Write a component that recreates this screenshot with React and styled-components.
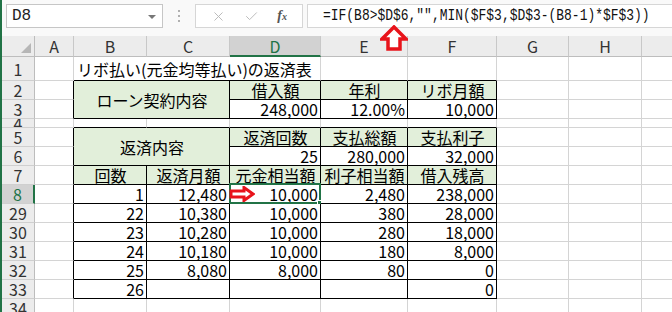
import React from "react";
import styled, { createGlobalStyle } from "styled-components";
import { X, Check } from "lucide-react";

const GlobalStyle = createGlobalStyle`
  html, body {
    margin: 0;
    padding: 0;
    background: #fff;
  }
  body {
    width: 672px;
    height: 312px;
    overflow: hidden;
    font-family: "Noto Sans CJK JP", "Noto Sans", sans-serif;
  }
`;

const GREEN = "#217346";
const FILL = "#e2efda";
const GRID = "#d4d4d4";

const COLS = [33, 39, 73, 83, 91, 87, 89, 72, 73, 90];
const LETTERS = ["A", "B", "C", "D", "E", "F", "G", "H", "I"];

const Window = styled.div`
  position: relative;
  width: 672px;
  height: 312px;
  overflow: hidden;
  border-left: 2px solid ${GREEN};
  box-sizing: border-box;
  background: #fff;
`;

const FormulaBar = styled.div`
  display: flex;
  align-items: flex-start;
  height: 36px;
  padding: 4px 0 0 4px;
  box-sizing: border-box;
  background: #f9f9f9;
`;

const NameBox = styled.div`
  position: relative;
  width: 157px;
  height: 24px;
  box-sizing: border-box;
  border: 1px solid #c6c6c6;
  background: #fff;
  display: flex;
  align-items: center;
  padding-left: 5px;
  font-family: "Liberation Mono", monospace;
  font-size: 16px;
  color: #222;
`;

const DropTriangle = styled.span`
  position: absolute;
  right: 6px;
  top: 10px;
  width: 0;
  height: 0;
  border-left: 4px solid transparent;
  border-right: 4px solid transparent;
  border-top: 4px solid #777;
`;

const Separator = styled.div`
  width: 32px;
  height: 24px;
  display: flex;
  flex-direction: column;
  align-items: center;
  justify-content: center;
  gap: 3px;
`;

const Dot = styled.span`
  width: 2px;
  height: 2px;
  background: #b0b0b0;
`;

const FnBox = styled.div`
  width: 108px;
  height: 24px;
  box-sizing: border-box;
  border: 1px solid #d6d6d6;
  background: #fff;
  display: flex;
  align-items: center;
  justify-content: space-around;
  padding: 0 6px;
  color: #b8b8b8;
`;

const Fx = styled.span`
  font-family: "Liberation Serif", serif;
  font-style: italic;
  font-weight: bold;
  font-size: 14px;
  color: #555;
  & sub {
    font-size: 10px;
    vertical-align: baseline;
  }
`;

const FormulaInput = styled.div`
  flex: 1;
  height: 24px;
  margin-left: 4px;
  box-sizing: border-box;
  border: 1px solid #d6d6d6;
  border-right: none;
  background: #fff;
  display: flex;
  align-items: center;
  padding-left: 15px;
  overflow: hidden;
  white-space: nowrap;
`;

const FormulaText = styled.span`
  display: inline-block;
  font-family: "Liberation Mono", monospace;
  font-size: 16px;
  color: #111;
  transform: scaleX(0.81);
  transform-origin: left center;
`;

const Sheet = styled.div`
  display: grid;
  grid-template-columns: ${(p) => p.$cols};
  grid-template-rows: ${(p) => p.$rows};
`;

const Corner = styled.div`
  position: relative;
  background: #ececec;
  border-right: 1px solid #bdbdbd;
  border-bottom: 1px solid #bdbdbd;
  box-sizing: border-box;
  &::after {
    content: "";
    position: absolute;
    right: 3px;
    bottom: 3px;
    border-left: 10px solid transparent;
    border-bottom: 10px solid #b6b6b6;
  }
`;

const ColHead = styled.div`
  box-sizing: border-box;
  background: ${(p) => (p.$active ? "#d2d2d2" : "#ececec")};
  color: ${(p) => (p.$active ? GREEN : "#333")};
  border-right: 1px solid #c8c8c8;
  border-bottom: ${(p) => (p.$active ? `2px solid ${GREEN}` : "1px solid #bdbdbd")};
  display: flex;
  align-items: center;
  justify-content: center;
  font-size: 16px;
  line-height: 18px;
`;

const RowHead = styled.div`
  box-sizing: border-box;
  background: ${(p) => (p.$active ? "#d2d2d2" : "#ececec")};
  color: ${(p) => (p.$active ? GREEN : "#333")};
  border-right: ${(p) => (p.$active ? `2px solid ${GREEN}` : "1px solid #bdbdbd")};
  border-bottom: 1px solid #cfcfcf;
  display: flex;
  align-items: center;
  justify-content: center;
  font-size: 16px;
  line-height: 16px;
  overflow: hidden;
`;

const Cell = styled.div`
  position: relative;
  box-sizing: border-box;
  grid-column: span ${(p) => p.$cs};
  grid-row: span ${(p) => p.$rs};
  background: ${(p) => (p.$fill ? FILL : "#fff")};
  border-right: 1px solid ${(p) => (p.$darkRight ? "#000" : GRID)};
  border-bottom: 1px solid ${(p) => (p.$darkBottom ? "#000" : GRID)};
  display: flex;
  align-items: center;
  justify-content: ${(p) =>
    p.$align === "right" ? "flex-end" : p.$align === "center" ? "center" : "flex-start"};
  padding: 0 2px 0 3px;
  font-size: 16px;
  line-height: 18px;
  color: #000;
  white-space: nowrap;
`;

const Selection = styled.div`
  position: absolute;
  top: -2px;
  left: -1px;
  right: -1px;
  bottom: -1px;
  border: 2px solid ${GREEN};
  pointer-events: none;
`;

const Handle = styled.span`
  position: absolute;
  right: -5px;
  bottom: -5px;
  width: 5px;
  height: 5px;
  background: ${GREEN};
  border: 1px solid #fff;
`;

const Marker = styled.div`
  position: absolute;
  left: ${(p) => p.$x}px;
  top: ${(p) => p.$y}px;
  line-height: 0;
  pointer-events: none;
`;

const UpArrow = () => (
  <svg width="28" height="26" viewBox="0 0 28 26">
    <path
      d="M14 2 L26 14 L20 14 L20 24 L8 24 L8 14 L2 14 Z"
      fill="#fff"
      stroke="#e8141b"
      strokeWidth="3.5"
      strokeLinejoin="miter"
    />
  </svg>
);

const RightArrow = () => (
  <svg width="26" height="16" viewBox="0 0 26 16">
    <path
      d="M24 8 L15 1.5 L15 5 L2 5 L2 11 L15 11 L15 14.5 Z"
      fill="#fff"
      stroke="#e8141b"
      strokeWidth="3"
      strokeLinejoin="miter"
    />
  </svg>
);

const hdr = (text) => ({ text, fill: true, align: "center" });
const num = (text) => ({ text, align: "right" });

const data = [
  [8, "1", "12,480", "10,000", "2,480", "238,000"],
  [29, "22", "10,380", "10,000", "380", "28,000"],
  [30, "23", "10,280", "10,000", "280", "18,000"],
  [31, "24", "10,180", "10,000", "180", "8,000"],
  [32, "25", "8,080", "8,000", "80", "0"],
  [33, "26", "", "", "", "0"],
];

const rows = [
  { n: 1, h: 24, cells: { 1: { text: "リボ払い(元金均等払い)の返済表", cs: 3 } } },
  {
    n: 2,
    h: 19,
    table: true,
    cells: {
      1: { text: "ローン契約内容", cs: 2, rs: 2, fill: true, align: "center" },
      3: hdr("借入額"),
      4: hdr("年利"),
      5: hdr("リボ月額"),
    },
  },
  { n: 3, h: 19, table: true, cells: { 3: num("248,000"), 4: num("12.00%"), 5: num("10,000") } },
  { n: 4, h: 9, cells: {} },
  {
    n: 5,
    h: 19,
    table: true,
    cells: {
      1: { text: "返済内容", cs: 2, rs: 2, fill: true, align: "center" },
      3: hdr("返済回数"),
      4: hdr("支払総額"),
      5: hdr("支払利子"),
    },
  },
  { n: 6, h: 19, table: true, cells: { 3: num("25"), 4: num("280,000"), 5: num("32,000") } },
  {
    n: 7,
    h: 19,
    table: true,
    cells: {
      1: hdr("回数"),
      2: hdr("返済月額"),
      3: hdr("元金相当額"),
      4: hdr("利子相当額"),
      5: hdr("借入残高"),
    },
  },
  ...data.map(([n, ...vals]) => ({
    n,
    h: 19,
    table: true,
    active: n === 8,
    cells: Object.fromEntries(vals.map((v, i) => [i + 1, num(v)])),
  })),
  { n: 34, h: 19, cells: {} },
  { n: 35, h: 19, cells: {} },
];

const inTable = (ri, ci) => {
  const row = rows[ri];
  return !!row && row.table && ci >= 1 && ci <= 5;
};

function renderRows() {
  const covered = new Set();
  const out = [];
  rows.forEach((row, ri) => {
    out.push(
      <RowHead key={`h${ri}`} $active={row.active}>
        {row.n}
      </RowHead>
    );
    for (let ci = 0; ci < LETTERS.length; ci++) {
      if (covered.has(`${ri}-${ci}`)) continue;
      const def = row.cells[ci] || {};
      const cs = def.cs || 1;
      const rs = def.rs || 1;
      for (let r = 0; r < rs; r++)
        for (let c = 0; c < cs; c++) covered.add(`${ri + r}-${ci + c}`);
      const lastRow = ri + rs - 1;
      const lastCol = ci + cs - 1;
      const darkRight = inTable(ri, lastCol) || inTable(ri, lastCol + 1);
      const darkBottom = inTable(lastRow, ci) || inTable(lastRow + 1, ci);
      const selected = row.active && ci === 3;
      out.push(
        <Cell
          key={`${ri}-${ci}`}
          $cs={cs}
          $rs={rs}
          $fill={def.fill}
          $align={def.align}
          $darkRight={darkRight}
          $darkBottom={darkBottom}
        >
          {def.text}
          {selected && (
            <>
              <Selection>
                <Handle />
              </Selection>
              <Marker $x={-1} $y={1}>
                <RightArrow />
              </Marker>
            </>
          )}
        </Cell>
      );
    }
  });
  return out;
}

export default function App() {
  const cols = COLS.map((w) => `${w}px`).join(" ");
  const rowTracks = ["21px", ...rows.map((r) => `${r.h}px`)].join(" ");
  return (
    <Window>
      <GlobalStyle />
      <FormulaBar>
        <NameBox>
          D8
          <DropTriangle />
        </NameBox>
        <Separator>
          <Dot />
          <Dot />
          <Dot />
        </Separator>
        <FnBox>
          <X size={15} strokeWidth={1.5} />
          <Check size={15} strokeWidth={1.5} />
          <Fx>
            f<sub>x</sub>
          </Fx>
        </FnBox>
        <FormulaInput>
          <FormulaText>=IF(B8&gt;$D$6,"",MIN($F$3,$D$3-(B8-1)*$F$3))</FormulaText>
        </FormulaInput>
      </FormulaBar>
      <Sheet $cols={cols} $rows={rowTracks}>
        <Corner />
        {LETTERS.map((l) => (
          <ColHead key={l} $active={l === "D"}>
            {l}
          </ColHead>
        ))}
        {renderRows()}
      </Sheet>
      <Marker $x={378} $y={25}>
        <UpArrow />
      </Marker>
    </Window>
  );
}
